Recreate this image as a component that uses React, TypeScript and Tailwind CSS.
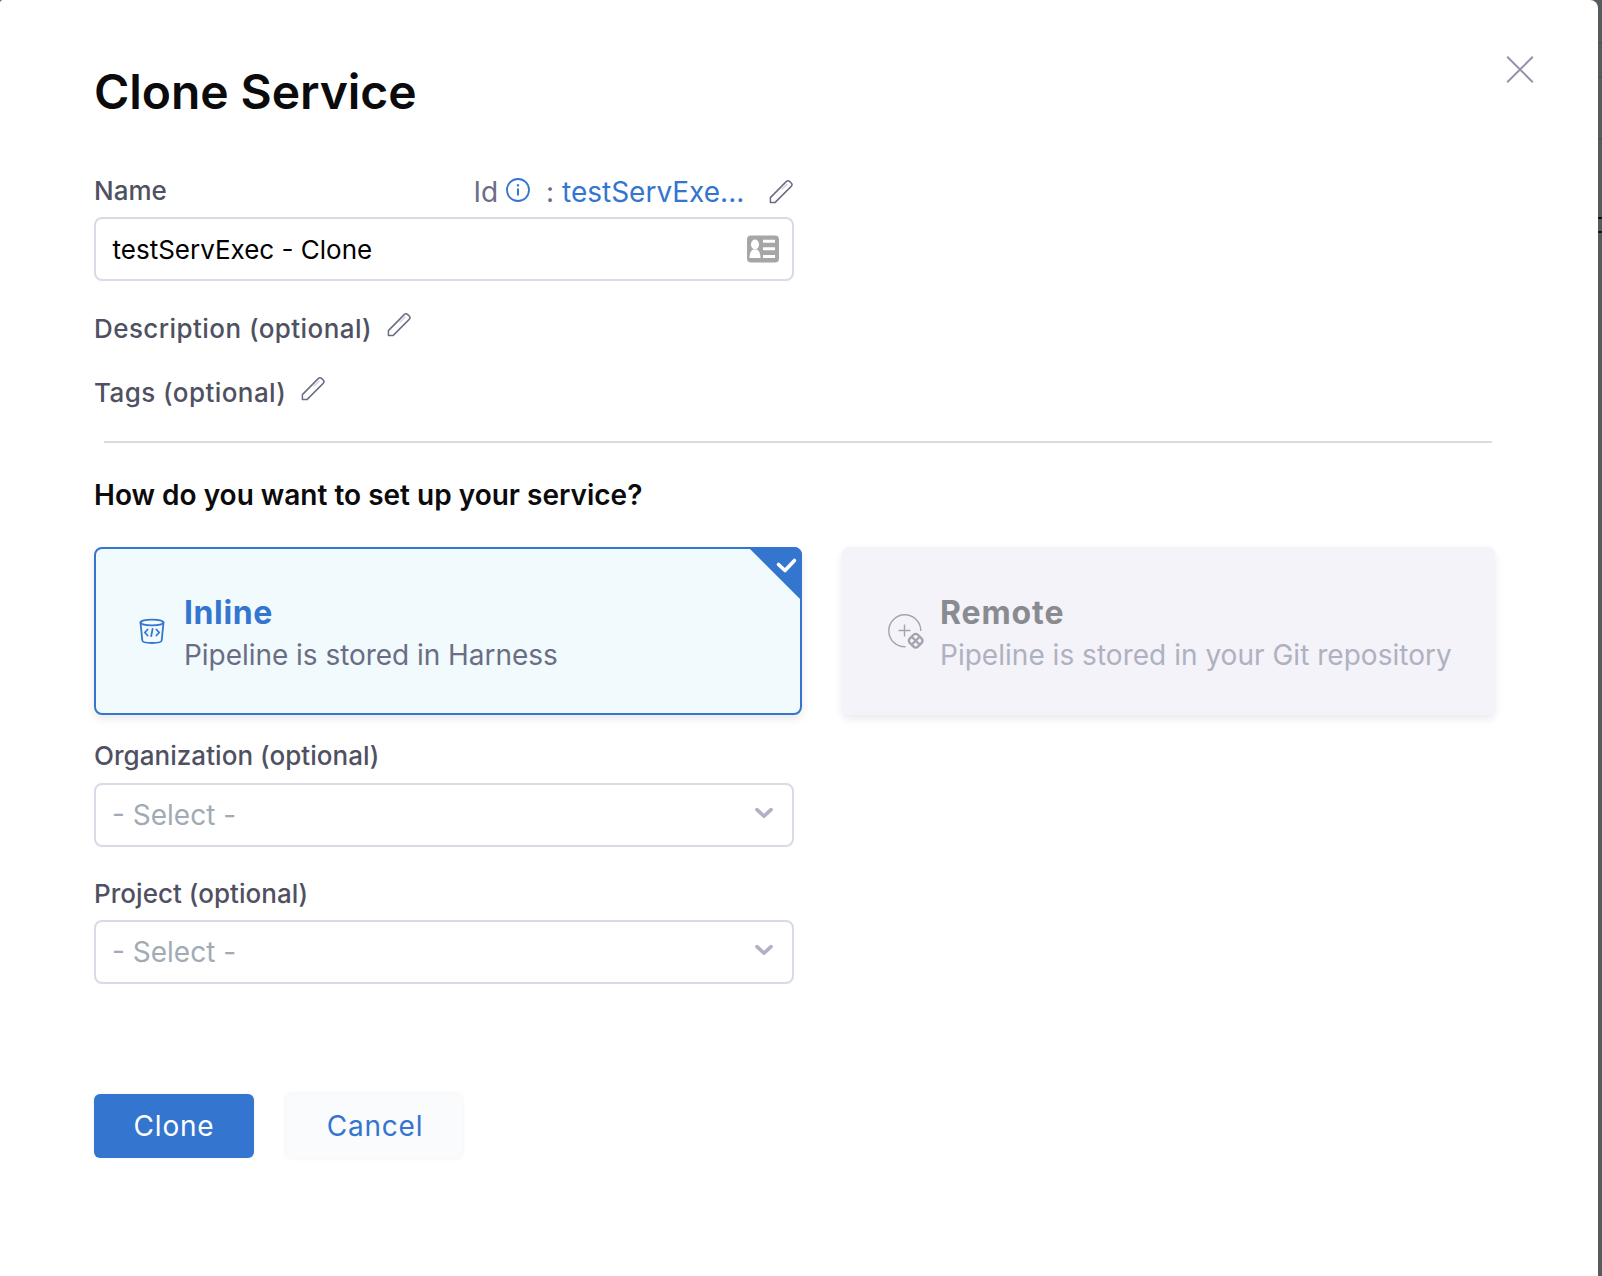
import React from "react";

function Pencil({ className = "" }: { className?: string }) {
  return (
    <svg className={className} width="25" height="25" viewBox="0 0 25 25" fill="none" stroke="#6b6d85" strokeWidth="1.5" strokeLinejoin="round">
      <path d="M1.4 23.4V18.6L17.2 2.6C18.2 1.6 19.8 1.6 20.8 2.6L22.2 4C23.2 5 23.2 6.4 22.2 7.4L6.2 23.4Z" />
      <path d="M12.5 10.5L18.5 4.8" stroke="#d5d6e0" />
    </svg>
  );
}

function Select({ label, className, labelClassName }: { label: string; className: string; labelClassName: string }) {
  return (
    <div className={className}>
      <div className={`h-[32px] text-[26px] leading-[32px] font-medium tracking-[0.04px] text-[#4f5162] ${labelClassName}`}>{label}</div>
      <div className="flex h-16 w-[700px] items-center justify-between rounded-lg border-2 border-[#d9dae6] pr-[17px] pl-[16px]">
        <span className="text-[28px] leading-[34px] text-[#a0abb6]">- Select -</span>
        <svg className="-mt-1" width="22" height="14" viewBox="0 0 22 14" fill="none" stroke="#b0b1c3" strokeWidth="3.6" strokeLinecap="round" strokeLinejoin="round">
          <path d="M4 3.6L11 10.2L18 3.6" />
        </svg>
      </div>
    </div>
  );
}

export default function App() {
  return (
    <div className="h-[1276px] w-[1602px] overflow-hidden bg-[#565b5f] font-['Inter',sans-serif]">
      <div className="flex h-full">
        <main className="h-full w-[1598px] rounded-tl-[3px] rounded-tr-lg bg-white pl-[94px]">
          <header className="flex h-[124px] justify-between pr-[64px]">
            <h1 className="pt-[62px] text-[48px] leading-[60px] font-semibold tracking-[-0.08px] text-[#0b0b0d]">Clone Service</h1>
            <svg className="mt-[56px]" width="28" height="28" viewBox="0 0 28 28" fill="none" stroke="#9293ab" strokeWidth="2">
              <path d="M1.2 0.8L26.8 26.2M26.8 0.8L1.2 26.2" />
            </svg>
          </header>

          <div className="mt-[50px] flex h-[34px] w-[700px] items-center">
            <span className="w-[379.5px] text-[26px] leading-[34px] font-medium text-[#4f5162]">Name</span>
            <span className="w-[32.5px] pt-[2px] text-[28px] leading-[34px] text-[#6b6d85]">Id</span>
            <svg className="-mt-[2px]" width="24" height="24" viewBox="0 0 24 24" fill="none" stroke="#3475cf">
              <circle cx="12" cy="12" r="11" strokeWidth="1.8" />
              <path d="M12 10.5V17.5" strokeWidth="2" />
              <path d="M12 6.2V8.4" strokeWidth="2.2" />
            </svg>
            <span className="ml-[16px] w-[16px] pt-[2px] text-[28px] leading-[34px] text-[#6b6d85]">:</span>
            <span className="w-[207px] pt-[2px] text-[28px] leading-[34px] text-[#3475cf]">testServExe...</span>
            <Pencil />
          </div>
          <div className="mt-[9px] flex h-16 w-[700px] items-center justify-between rounded-lg border-2 border-[#d9dae6] pr-[13px] pl-[16.5px]">
            <span className="pt-[2px] text-[26px] leading-[32px] text-black">testServExec - Clone</span>
            <svg width="32" height="28" viewBox="0 0 32 28">
              <rect y="0.5" width="32" height="27" rx="4" fill="#a6a6a6" />
              <ellipse cx="8" cy="9.5" rx="4" ry="5" fill="#fff" />
              <path d="M2.5 23C2.5 17.5 4.5 15.5 6 14.5H10C11.5 15.5 13.5 17.5 13.5 23Z" fill="#fff" />
              <path d="M16 6.2H28M16 13.8H28M16 21.4H28" stroke="#fff" strokeWidth="3" />
            </svg>
          </div>

          <div className="mt-[31px] flex h-[34px] items-center">
            <span className="text-[26px] leading-[32px] font-medium tracking-[0.43px] text-[#4f5162]">Description (optional)</span>
            <Pencil className="-mt-[9px] ml-[15px]" />
          </div>
          <div className="mt-[30px] flex h-[34px] items-center">
            <span className="text-[26px] leading-[32px] font-medium tracking-[0.43px] text-[#4f5162]">Tags (optional)</span>
            <Pencil className="-mt-[9px] ml-[15px]" />
          </div>
          <div className="mt-[31px] ml-[10px] h-[2px] w-[1388px] bg-[#dbdbde]" />

          <h2 className="mt-[35px] h-[34px] text-[28px] leading-[34px] font-semibold text-[#0b0b0d]">How do you want to set up your service?</h2>

          <div className="mt-[35px] flex gap-[39.5px]">
            <div className="relative flex h-[168px] w-[708px] rounded-lg border-2 border-[#3475cf] bg-[#f1fafd] shadow-[0_4px_8px_rgba(40,41,61,0.1)]">
              <svg className="mt-[69px] ml-[42.5px]" width="26" height="27" viewBox="0 0 26 27" fill="none" stroke="#3475cf" strokeWidth="1.8" strokeLinecap="round" strokeLinejoin="round">
                <ellipse cx="13" cy="4.5" rx="11.5" ry="2.9" />
                <path d="M1.5 4.5L3.3 22.5C3.5 24 7.5 25 13 25S22.5 24 22.7 22.5L24.5 4.5" />
                <path d="M8.6 11.5L5.8 14.5L8.6 17.5M17.4 11.5L20.2 14.5L17.4 17.5M13.6 10.8L12.2 18.2" />
              </svg>
              <div className="ml-[19.5px] pt-[44px]">
                <div className="text-[32px] leading-[40px] font-bold tracking-[0.6px] text-[#3475cf]">Inline</div>
                <div className="mt-[5px] text-[28px] leading-[34px] tracking-[-0.04px] text-[#6b6d85]">Pipeline is stored in Harness</div>
              </div>
              <svg className="absolute -top-[2px] -right-[2px] rounded-tr-lg" width="54" height="54" viewBox="0 0 54 54" fill="none">
                <path d="M0 0H54V54Z" fill="#3475cf" />
                <path d="M30.5 17.5L37 23.5L46.5 13.5" stroke="#fff" strokeWidth="3.6" strokeLinecap="round" strokeLinejoin="round" />
              </svg>
            </div>
            <div className="flex h-[168px] w-[653.5px] rounded-lg bg-[#f3f3f9] shadow-[0_4px_8px_rgba(40,41,61,0.1)]">
              <svg className="mt-[66px] ml-[46px]" width="37" height="37" viewBox="0 0 37 37" fill="none" stroke="#a3a4b0">
                <path d="M17.5 33.8A16 16 0 1 1 32.8 18" strokeWidth="1.4" />
                <path d="M16.5 11.5V23.5M10.5 17.5H22.5" strokeWidth="1.4" />
                <rect x="-5.7" y="-5.7" width="11.4" height="11.4" rx="3" transform="translate(27.7 27.7) rotate(45)" strokeWidth="2.4" />
                <path d="M24 24L31.4 31.4M31.4 24L24 31.4" strokeWidth="2.2" />
              </svg>
              <div className="ml-[15.5px] pt-[46px]">
                <div className="text-[32px] leading-[40px] font-bold tracking-[0.9px] text-[#8a8b90]">Remote</div>
                <div className="mt-[5px] text-[28px] leading-[34px] tracking-[0.02px] whitespace-nowrap text-[#afb1c0]">Pipeline is stored in your Git repository</div>
              </div>
            </div>
          </div>

          <Select label="Organization (optional)" className="mt-[25px]" labelClassName="mb-[11px]" />
          <Select label="Project (optional)" className="mt-[31px]" labelClassName="mb-[10px]" />

          <div className="mt-[110px] flex gap-[32px]">
            <button className="h-16 w-[160px] rounded-md bg-[#3475cf] text-[28px] leading-[34px] tracking-[0.8px] text-white shadow-[0_0_4px_rgba(40,41,61,0.06)]">Clone</button>
            <button className="h-16 w-[176px] rounded-md bg-[#fafbfd] pl-[2px] text-[28px] leading-[34px] tracking-[0.8px] text-[#3475cf] shadow-[0_0_4px_rgba(40,41,61,0.08)]">Cancel</button>
          </div>
        </main>
        <aside className="flex w-1 flex-col pt-[42px]">
          <div className="h-[2px] bg-[#4f5458]" />
          <div className="mt-[32px] h-[2px] bg-[#4f5458]" />
          <div className="mt-[60px] h-[2px] bg-[#4f5458]" />
          <div className="mt-[77px] h-4 border-y-2 border-[#111214]" />
        </aside>
      </div>
    </div>
  );
}
